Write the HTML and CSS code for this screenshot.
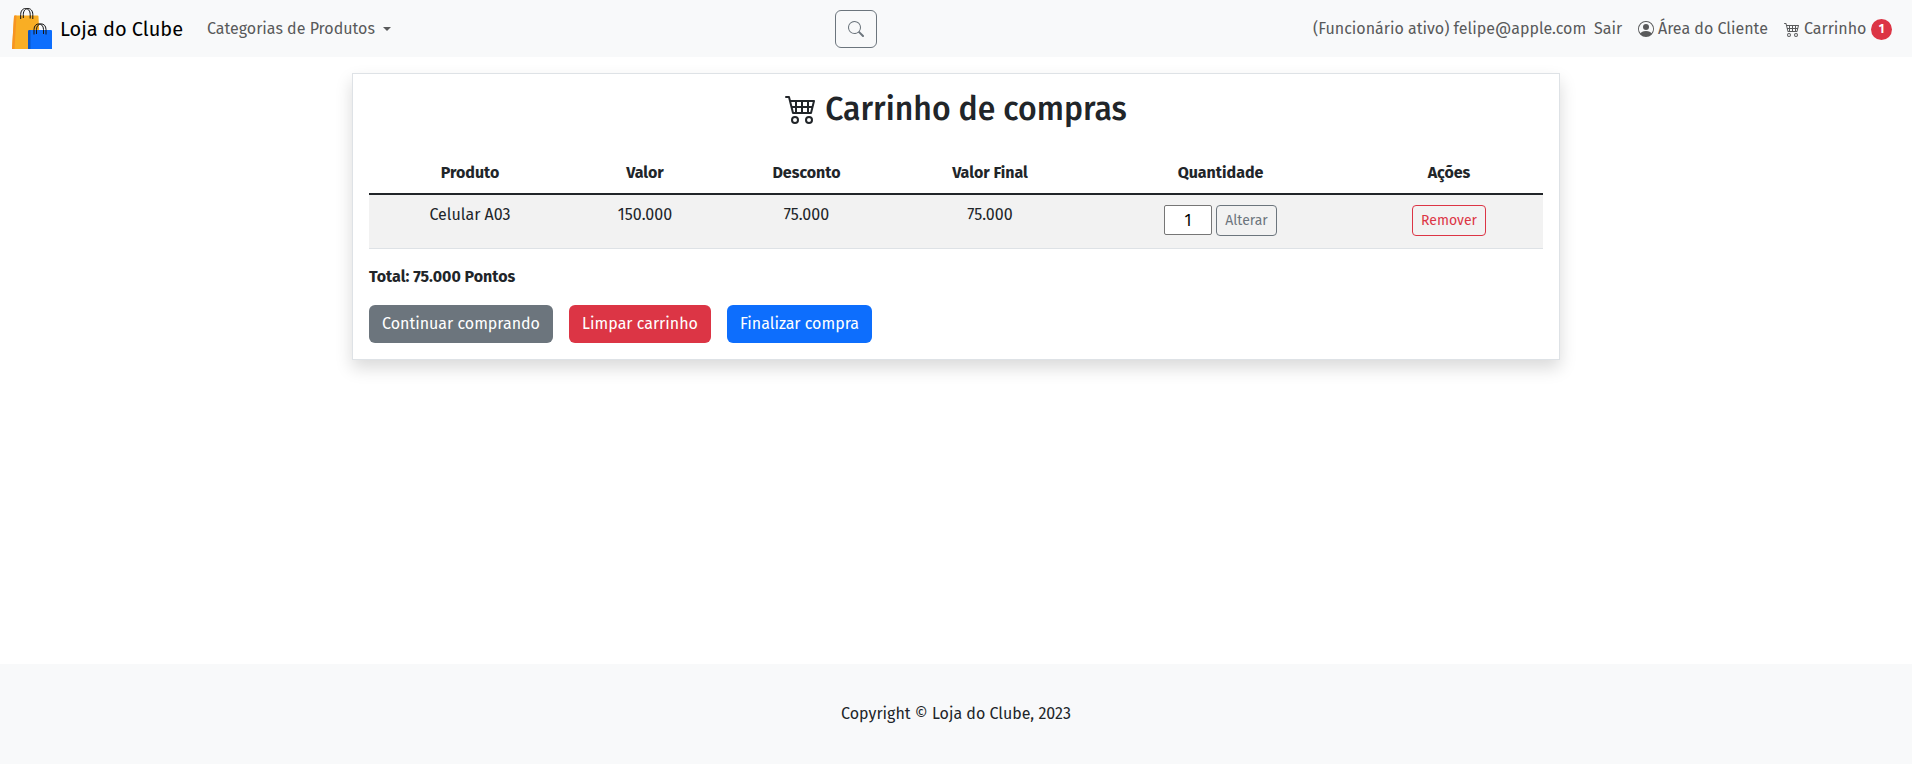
FILE: index.html
```html
<!DOCTYPE html>
<html lang="pt-BR">
<head>
<meta charset="utf-8">
<title>Loja do Clube</title>
<link rel="stylesheet" href="styles.css">
</head>
<body>
<svg class="defs" width="0" height="0" aria-hidden="true">
  <symbol id="cart" viewBox="0 0 16 16">
    <path d="M0 2.5A.5.5 0 0 1 .5 2H2a.5.5 0 0 1 .485.379L2.89 4H14.5a.5.5 0 0 1 .485.621l-1.5 6A.5.5 0 0 1 13 11H4a.5.5 0 0 1-.485-.379L1.61 3H.5a.5.5 0 0 1-.5-.5zM3.14 5l.5 2H5V5H3.14zM6 5v2h2V5H6zm3 0v2h2V5H9zm3 0v2h1.36l.5-2H12zm1.11 3H12v2h.61l.5-2zM11 8H9v2h2V8zM8 8H6v2h2V8zM5 8H3.89l.5 2H5V8zm0 5a1 1 0 1 0 0 2 1 1 0 0 0 0-2zm-2 1a2 2 0 1 1 4 0 2 2 0 0 1-4 0zm9-1a1 1 0 1 0 0 2 1 1 0 0 0 0-2zm-2 1a2 2 0 1 1 4 0 2 2 0 0 1-4 0z"/>
  </symbol>
</svg>
<nav class="navbar">
  <a class="brand">
    <svg class="logo" width="42" height="41" viewBox="0 0 42 41">
      <path d="M3 7.500h22.500q1 0 1 1L28 41H0L2 8.500q0-1 1-1z" fill="#f9ae24"/>
      <path d="M3 7.500h1.500L2.500 41H0L2 8.500q0-1 1-1z" fill="#f79422"/>
      <path d="M8.700 11V6.500c0-8 9.500-8 9.500 0v4M11.300 10V6.500c0-8 9.500-8 9.500 0v4.500" fill="none" stroke="#111" stroke-width="1"/>
      <path d="M17.500 22h21.500q1 0 1 1V41H16V23.500q0-1.500 1.500-1.500z" fill="#0d6efd"/>
      <path d="M17.500 22h1V41H16V23.500q0-1.500 1.500-1.500z" fill="#0b55c4"/>
      <path d="M22 26.500v-5c0-7.500 9.500-7.500 9.500 0V26M24.500 26v-4.500c0-7.500 9.500-7.500 9.500 0V26.500" fill="none" stroke="#151515" stroke-width="1"/>
    </svg>
    <span>Loja do Clube</span>
  </a>
  <a class="categories"><span>Categorias de Produtos</span><i class="caret"></i></a>
  <button class="search" aria-label="Buscar">
    <svg class="icon" viewBox="0 0 16 16"><path d="M11.742 10.344a6.500 6.500 0 1 0-1.397 1.398h-.001c.03.04.062.078.098.115l3.850 3.850a1 1 0 0 0 1.415-1.414l-3.850-3.850a1.007 1.007 0 0 0-.115-.1zM12 6.500a5.500 5.500 0 1 1-11 0 5.500 5.500 0 0 1 11 0z"/></svg>
  </button>
  <div class="account">
    <span class="user">(Funcionário ativo) felipe@apple.com</span>
    <a class="logout">Sair</a>
    <a class="client"><svg class="icon" viewBox="0 0 16 16"><path d="M11 6a3 3 0 1 1-6 0 3 3 0 0 1 6 0z"/><path fill-rule="evenodd" d="M0 8a8 8 0 1 1 16 0A8 8 0 0 1 0 8zm8-7a7 7 0 0 0-5.468 11.370C3.242 11.226 4.805 10 8 10s4.757 1.225 5.468 2.370A7 7 0 0 0 8 1z"/></svg><span>Área do Cliente</span></a>
    <a class="cart-link"><svg class="icon"><use href="#cart"/></svg><span>Carrinho</span></a>
    <span class="badge">1</span>
  </div>
</nav>
<main class="content">
  <section class="card">
    <h2 class="title"><svg class="title-icon"><use href="#cart"/></svg><span>Carrinho de compras</span></h2>
    <table class="items">
      <colgroup><col class="c-product"><col class="c-value"><col class="c-discount"><col class="c-final"><col class="c-quantity"><col class="c-actions"></colgroup>
      <thead><tr><th>Produto</th><th>Valor</th><th>Desconto</th><th>Valor Final</th><th>Quantidade</th><th>Ações</th></tr></thead>
      <tbody><tr>
        <td>Celular A03</td><td>150.000</td><td>75.000</td><td>75.000</td>
        <td><div class="quantity"><input class="amount" type="text" value="1"><button class="small change">Alterar</button></div></td>
        <td><div class="quantity"><button class="small remove">Remover</button></div></td>
      </tr></tbody>
    </table>
    <p class="total">Total: 75.000 Pontos</p>
    <div class="buttons">
      <button class="btn continue">Continuar comprando</button>
      <button class="btn clear">Limpar carrinho</button>
      <button class="btn finish">Finalizar compra</button>
    </div>
  </section>
</main>
<footer class="footer"><span>Copyright © Loja do Clube, 2023</span></footer>
</body>
</html>
```
FILE: styles.css
```css
* { box-sizing: border-box; }
body {
  margin: 0;
  min-height: 764px;
  display: flex;
  flex-direction: column;
  background: #fff;
  color: #212529;
  font-family: "Fira Sans", "Noto Sans", sans-serif;
  font-size: 16px;
  line-height: 24px;
}
.defs { display: none; }
button, input { font: inherit; padding: 0; }
span, a, th, td, button { white-space: nowrap; }
.icon { width: 16px; height: 16px; fill: currentColor; flex: none; }

.navbar { display: flex; align-items: center; height: 57px; padding: 0 20px 0 12px; background: #f8f9fa; color: #595a5b; }
.brand { display: flex; align-items: center; width: 195px; gap: 6px; color: #000; font-size: 20px; }
.logo { flex: none; }
.categories { display: flex; align-items: center; justify-content: space-between; width: 184px; }
.caret { border-top: 4.800px solid; border-left: 4.800px solid transparent; border-right: 4.800px solid transparent; }
.search { display: flex; align-items: center; justify-content: center; width: 42px; height: 38px; margin-left: 444px; background: transparent; border: 1px solid #6c757d; border-radius: 6px; color: #6c757d; }
.account { display: flex; align-items: center; margin-left: auto; }
.user { width: 281px; }
.logout { width: 44px; }
.client { display: flex; align-items: center; gap: 4px; width: 146px; }
.cart-link { display: flex; align-items: center; gap: 4px; width: 87px; }
.badge { width: 21px; height: 21px; margin-top: 1px; border-radius: 50%; background: #dc3545; color: #fff; font-size: 12px; font-weight: 700; line-height: 21px; text-align: center; }

.content { flex: 1; padding-top: 16px; }
.card { width: 1208px; height: 287px; margin: 0 auto; padding: 16px; border: 1px solid #dee2e6; background: #fff; box-shadow: 0 8px 16px rgba(0, 0, 0, .15); }
.title { display: flex; align-items: center; justify-content: center; gap: 8px; height: 38px; margin: 0 0 25px; font-size: 32px; font-weight: 500; line-height: 38px; }
.title-icon { width: 32px; height: 32px; margin-bottom: 2px; fill: currentColor; }
.items { width: 1174px; table-layout: fixed; border-collapse: collapse; text-align: center; }
.c-product { width: 202px; }
.c-value { width: 148px; }
.c-discount { width: 175px; }
.c-final { width: 192px; }
.c-quantity { width: 269px; }
.c-actions { width: 188px; }
.items th { height: 41px; padding: 0; border-bottom: 2px solid #212529; }
.items td { height: 54px; padding: 8px 0 0; vertical-align: top; background: #f2f2f2; border-bottom: 1px solid #dee2e6; }
.quantity { display: flex; justify-content: center; gap: 4px; padding-top: 2px; }
.amount { width: 48px; height: 30px; border: 1px solid #767676; border-radius: 2px; background: #fff; color: #000; text-align: center; }
.small { height: 31px; border: 1px solid; border-radius: 4px; background: transparent; font-size: 14px; }
.change { width: 61px; color: #6c757d; }
.remove { width: 74px; color: #dc3545; }
.total { margin: 16px 0; font-weight: 700; }
.buttons { display: flex; gap: 16px; }
.btn { height: 38px; border: 0; border-radius: 6px; color: #fff; }
.continue { width: 184px; background: #6c757d; }
.clear { width: 142px; background: #dc3545; }
.finish { width: 145px; background: #0d6efd; }
.footer { display: flex; align-items: center; justify-content: center; height: 100px; background: #f8f9fa; }
```
